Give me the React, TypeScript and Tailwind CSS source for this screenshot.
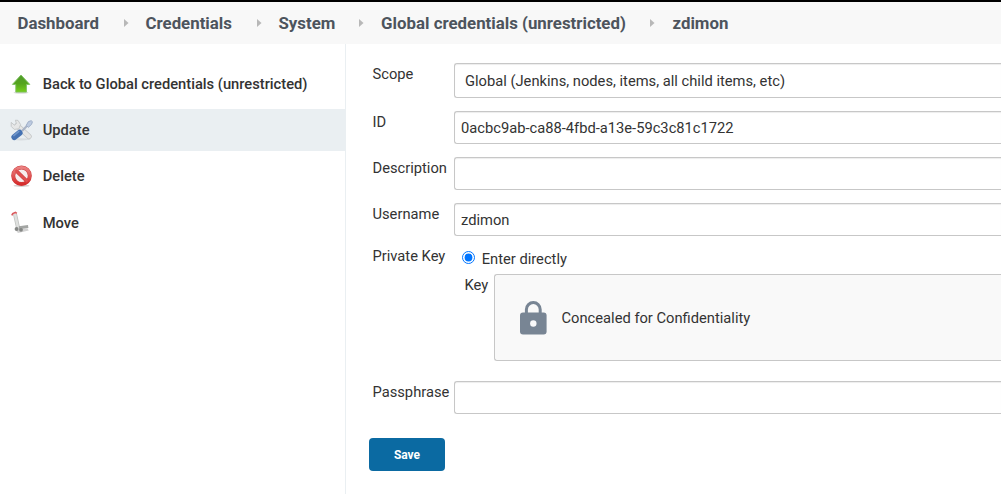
import React from "react";

function BackIcon() {
  return (
    <svg width="22" height="22" viewBox="0 0 22 22">
      <defs>
        <linearGradient id="up" x1="0" y1="0" x2="0" y2="1">
          <stop offset="0" stopColor="#4f9a2c" />
          <stop offset="0.5" stopColor="#55a41d" />
          <stop offset="1" stopColor="#76cf1c" />
        </linearGradient>
      </defs>
      <ellipse cx="11" cy="19.6" rx="7.5" ry="1.2" fill="#dcdcdc" />
      <path d="M11 2 19.8 11.4h-3.4v7.7H5.8v-7.7H2.4Z" fill="url(#up)" stroke="#7cc05c" strokeWidth="0.9" strokeLinejoin="round" />
    </svg>
  );
}

function ToolsIcon() {
  return (
    <svg width="24" height="24" viewBox="0 0 24 24">
      <ellipse cx="11" cy="21.3" rx="9.5" ry="1.1" fill="#d8dde0" />
      <path d="M7 7.5 19 18.5" stroke="#c2c5c6" strokeWidth="5.4" strokeLinecap="round" />
      <path d="M7 7.5 19 18.5" stroke="#e6e6e5" strokeWidth="4" strokeLinecap="round" />
      <path d="M1.2 4.4v4l3 3 4.6-.6 1.8-4.2L8 2.4l-2.6-.2 1 3.4-2 1.6Z" fill="#e6e7e7" stroke="#c2c5c6" strokeWidth="0.9" />
      <path d="M12 13 17.6 7.2" stroke="#a9b4c6" strokeWidth="2.2" />
      <path d="m16.2 7.4 2.2-3.8 2.8-.9 1.2 1-.8 2.6-3.2 3Z" fill="#bccae0" stroke="#9fafc8" strokeWidth="1" />
      <path d="m4.4 19 5.2-4.2" stroke="#4672b2" strokeWidth="6" strokeLinecap="round" />
      <path d="m3.8 17.6 5-4.2" stroke="#7096cb" strokeWidth="1.6" strokeLinecap="round" />
    </svg>
  );
}

function DeleteIcon() {
  return (
    <svg width="24" height="24" viewBox="0 0 24 24">
      <defs>
        <linearGradient id="no" x1="0" y1="0" x2="0" y2="1">
          <stop offset="0" stopColor="#ea8080" />
          <stop offset="1" stopColor="#d62c2c" />
        </linearGradient>
      </defs>
      <ellipse cx="11.5" cy="21.8" rx="8" ry="1.1" fill="#d5d0d0" />
      <circle cx="11.5" cy="11.8" r="8.3" fill="#f7eeee" stroke="#cc4040" strokeWidth="4" />
      <path d="m5.5 6.1 12 11.6" stroke="#cc4040" strokeWidth="3.6" />
      <circle cx="11.5" cy="11.8" r="8.3" fill="none" stroke="url(#no)" strokeWidth="3" />
      <path d="m5.5 6.1 12 11.6" stroke="#df5050" strokeWidth="2.4" />
    </svg>
  );
}

function MoveIcon() {
  return (
    <svg width="24" height="24" viewBox="0 0 24 24">
      <path d="M5 18.6 17.5 17.6 18.8 19.4 8 22Z" fill="#d2d2d2" />
      <path d="M5 3 8.2 17.5" stroke="#c0c2c0" strokeWidth="4" />
      <path d="M5 3 8.2 17.5" stroke="#dfe1df" strokeWidth="2.4" />
      <path d="m9 16.8 9.2-1.4" stroke="#a3a5a3" strokeWidth="3" />
      <path d="m1.8 4.4 1-1.8L5.4 1.4l1.4 1" fill="none" stroke="#d95a5e" strokeWidth="1.7" />
      <circle cx="6.6" cy="18" r="2" fill="#868886" />
      <circle cx="11" cy="18.8" r="1.9" fill="#858785" />
    </svg>
  );
}

const crumbs = [
  { label: "Dashboard", box: "w-[128px]" },
  { label: "Credentials", box: "w-[133px]" },
  { label: "System", box: "w-[102.6px]" },
  { label: "Global credentials (unrestricted)", box: "w-[291.4px]" },
  { label: "zdimon", box: "" },
];

const tasks = [
  { label: "Back to Global credentials (unrestricted)", Icon: BackIcon, row: "h-[42px]" },
  { label: "Update", Icon: ToolsIcon, row: "mt-1 h-[42px] bg-[#eaeff2]" },
  { label: "Delete", Icon: DeleteIcon, row: "mt-1 h-[42px]" },
  { label: "Move", Icon: MoveIcon, row: "mt-[5px] h-[42px]" },
];

const field =
  "block min-w-0 flex-1 rounded-l-[3px] border border-r-0 border-[#c7c7c7] bg-white text-[#333] shadow-[inset_0_1px_1px_rgba(0,0,0,0.075)] outline-none";

function Row({ label, className, labelClass = "pt-[2px]", children }: { label: string; className: string; labelClass?: string; children: React.ReactNode }) {
  return (
    <div className={`flex items-start ${className}`}>
      <label className={`w-[82px] shrink-0 pl-[0.5px] whitespace-nowrap leading-[18px] ${labelClass}`}>{label}</label>
      {children}
    </div>
  );
}

export default function App() {
  return (
    <div className="flex h-[494px] w-full flex-col overflow-hidden bg-white font-['Roboto',sans-serif] text-[14.71px] text-[#333]">
      <header className="flex h-[44px] shrink-0 items-center border-t-2 border-black bg-[#f8f8f8] pl-[17.5px] text-[16.85px] font-bold text-[#4d545d]">
        {crumbs.map((c, i) => (
          <div key={c.label} className={`flex shrink-0 items-center whitespace-nowrap ${c.box}`}>
            <span className="pt-px">{c.label}</span>
            {i < crumbs.length - 1 && (
              <svg className="mr-[17px] ml-auto" width="5" height="8" viewBox="0 0 5 8">
                <path d="M0 0v8l4.5-4Z" fill="#b8b8b8" />
              </svg>
            )}
          </div>
        ))}
      </header>
      <div className="flex min-h-0 flex-1">
        <nav className="w-[346px] shrink-0 border-r border-[#eaeff2] pt-[19px]">
          {tasks.map(({ label, Icon, row }) => (
            <a key={label} className={`flex items-center whitespace-nowrap font-medium ${row}`}>
              <span className="flex w-[42.7px] shrink-0 pl-[10px]">
                <Icon />
              </span>
              <span className="pt-px">{label}</span>
            </a>
          ))}
        </nav>
        <main className="min-w-0 flex-1 pt-[19px] pl-[26px]">
          <Row label="Scope" className="h-[48px]">
            <div className={`${field} h-[35px] pl-[10px] leading-[35px]`}>Global (Jenkins, nodes, items, all child items, etc)</div>
          </Row>
          <Row label="ID" className="h-[46px]">
            <input className={`${field} h-[33px] pl-[6px]`} defaultValue="0acbc9ab-ca88-4fbd-a13e-59c3c81c1722" />
          </Row>
          <Row label="Description" className="h-[46px]">
            <input className={`${field} h-[33px] pl-[6px]`} />
          </Row>
          <Row label="Username" className="h-[46px]">
            <input className={`${field} h-[33px] pl-[6px]`} defaultValue="zdimon" />
          </Row>
          <Row label="Private Key" className="h-[25px]" labelClass="-mt-[2px]">
            <div className="flex pl-2">
              <input type="radio" defaultChecked className="mt-[2px] mr-[6.7px] size-[13px]" />
              <span className="leading-[20px]">Enter directly</span>
            </div>
          </Row>
          <div className="flex h-[107px] items-start pl-[92px]">
            <span className="w-[30px] shrink-0 pt-[2px] pl-[0.5px] leading-[18px]">Key</span>
            <div className="flex h-[87px] flex-1 items-center rounded-l-[3px] border border-r-0 border-[#c7c7c7] bg-[#f9f9f9] pl-[25px]">
              <svg width="27" height="34" viewBox="0 0 27 34">
                <path d="M6.4 13V8.5a6.9 6.9 0 0 1 13.8 0V13" fill="none" stroke="#788594" strokeWidth="3" />
                <rect y="11.5" width="26.6" height="22" rx="3" fill="#788594" />
                <circle cx="13.3" cy="22.5" r="3.2" fill="#f9f9f9" />
              </svg>
              <span className="ml-[14.5px] pt-px">Concealed for Confidentiality</span>
            </div>
          </div>
          <Row label="Passphrase" className="h-[57px]">
            <input className={`${field} h-[33px] pl-[6px]`} />
          </Row>
          <button className="-ml-[3px] h-[33px] w-[76px] rounded-[4px] bg-[#0b6aa2] text-[12px] font-bold text-white">Save</button>
        </main>
      </div>
    </div>
  );
}
